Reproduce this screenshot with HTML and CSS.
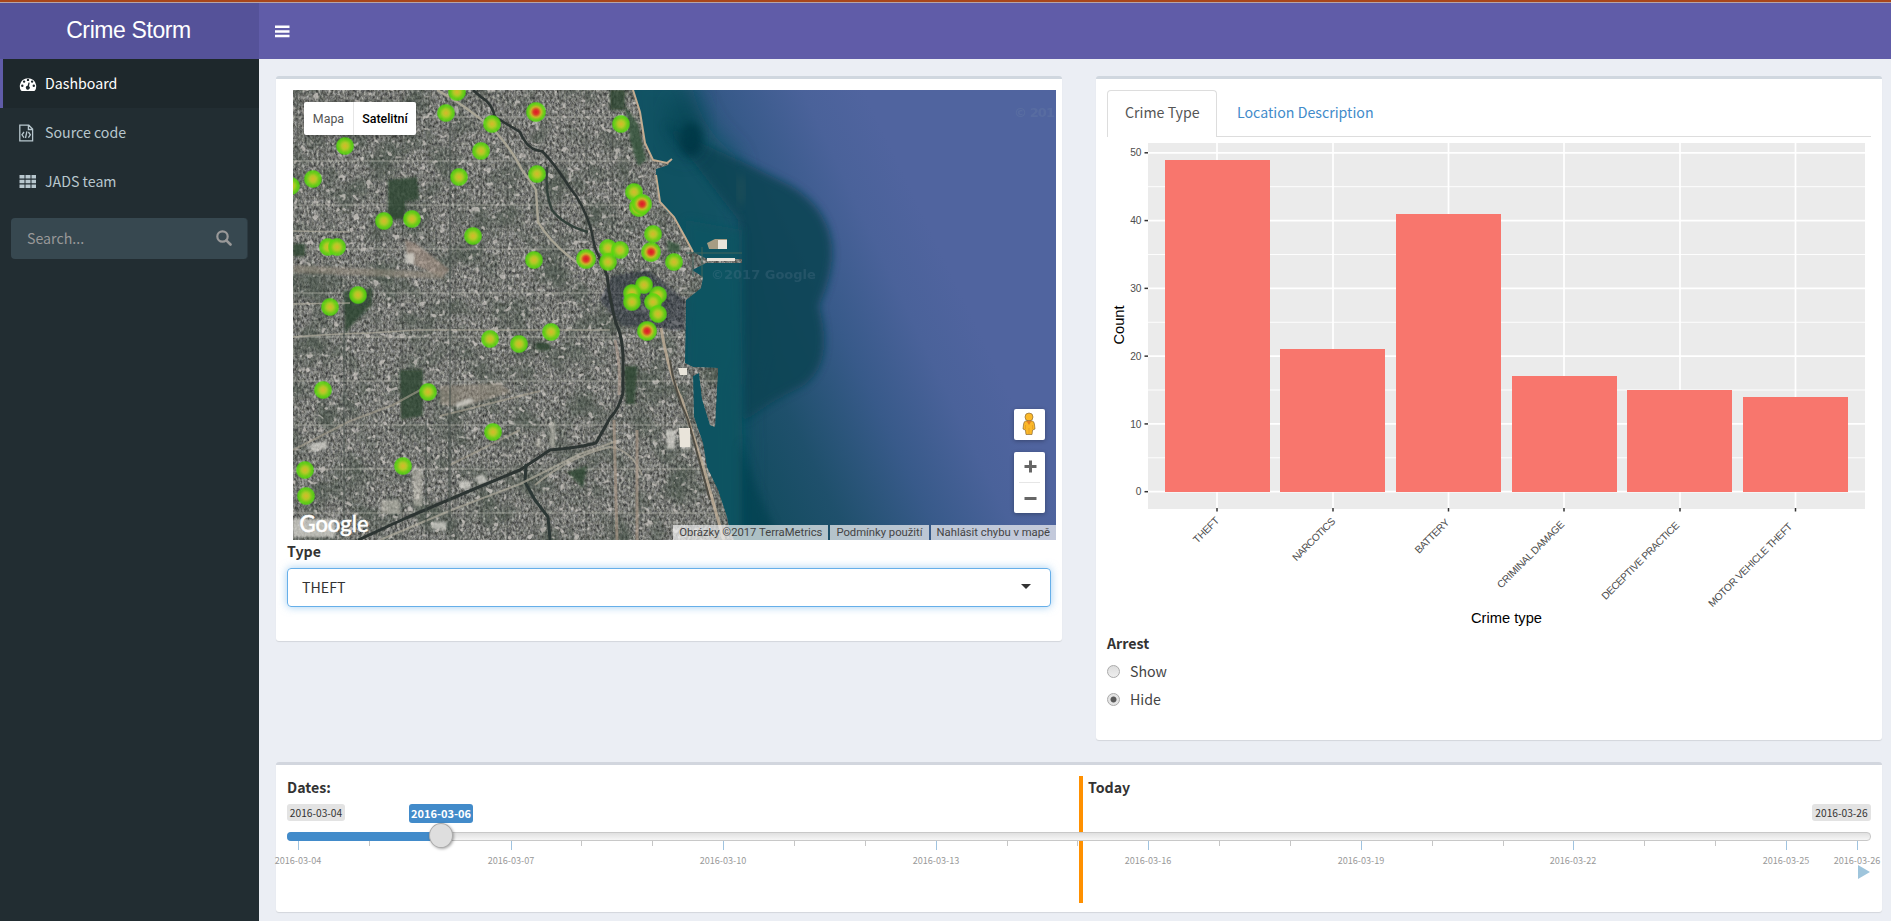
FILE: index.html
```html
<!DOCTYPE html>
<html lang="en">
<head>
<meta charset="utf-8">
<title>Crime Storm</title>
<link rel="stylesheet" href="styles.css">
</head>
<body>
<div class="app">
  <aside class="sidebar">
    <div class="logo">Crime Storm</div>
    <nav class="menu">
      <a class="menu-item active">
        <svg class="icon" viewBox="0 0 18 16" width="18" height="16"><path fill="currentColor" fill-rule="evenodd" d="M2 14.6 A8.2 8.2 0 1 1 16 14.6 Q15.7 15 15.2 15 H2.800 Q2.300 15 2 14.600 Z M2.100 9.800a1.200 1.200 0 1 0 2.400 0a1.200 1.200 0 1 0-2.400 0 M3.900 5.600a1.200 1.200 0 1 0 2.400 0a1.200 1.200 0 1 0-2.400 0 M7.800 3.900a1.200 1.200 0 1 0 2.400 0a1.200 1.200 0 1 0-2.400 0 M11.900 5.600a1.200 1.200 0 1 0 2.400 0a1.200 1.200 0 1 0-2.400 0 M13.600 9.800a1.200 1.200 0 1 0 2.400 0a1.200 1.200 0 1 0-2.400 0 M9.500 6.400 L8.600 9.800 A1.900 1.900 0 1 0 10 10.200 L10.700 6.700 Z"/></svg>
        <span>Dashboard</span></a>
      <a class="menu-item">
        <svg class="icon" viewBox="0 0 18 18" width="18" height="18"><path fill="none" stroke="currentColor" stroke-width="1.300" d="M.8 1.200 H9.800 L13.600 5 V16.800 H.8 Z M9.400 1.200 V5.500 H13.600 M5 8 L3 10.800 L5 13.600 M9.400 8 L11.400 10.800 L9.400 13.600 M7.900 7.400 L6.500 14"/></svg>
        <span>Source code</span></a>
      <a class="menu-item">
        <svg class="icon" viewBox="0 0 17 16" width="17" height="16"><path fill="currentColor" d="M0 1h5v3.600H0zM6 1h5v3.600H6zM12 1h4.500v3.600H12zM0 5.700h5v3.600H0zM6 5.700h5v3.600H6zM12 5.700h4.500v3.600H12zM0 10.400h5V14H0zM6 10.400h5V14H6zM12 10.400h4.500V14H12z"/></svg>
        <span>JADS team</span></a>
    </nav>
    <div class="search"><span>Search...</span>
      <svg viewBox="0 0 16 16" width="16" height="16"><circle cx="6.500" cy="6.500" r="5.200" fill="none" stroke="currentColor" stroke-width="2.200"/><path d="M10.300 10.300 L14.500 14.500" stroke="currentColor" stroke-width="2.600" stroke-linecap="round"/></svg>
    </div>
  </aside>
  <div class="main">
    <header class="topbar"><svg viewBox="0 0 15 13" width="15" height="13"><path fill="#fff" d="M0 .5h14.500v2.500H0zM0 5.200h14.500v2.500H0zM0 9.800h14.500v2.500H0z"/></svg></header>
    <main class="content">
      <div class="columns">
        <section class="box map-box">
          <div class="map">
            <svg class="map-art" viewBox="293 90 763 450" width="763" height="450">
              <defs>
                <filter id="city" x="0" y="0" width="100%" height="100%" color-interpolation-filters="sRGB">
                  <feTurbulence type="fractalNoise" baseFrequency="0.42 0.28" numOctaves="3" seed="7"/>
                  <feColorMatrix values="1.050 .2 0 0 -0.150  1.050 .2 0 0 -0.145  1.020 .15 .05 0 -0.145  0 0 0 0 1"/>
                </filter>
                <filter id="blotch" x="0" y="0" width="100%" height="100%" color-interpolation-filters="sRGB">
                  <feTurbulence type="fractalNoise" baseFrequency="0.03" numOctaves="3" seed="12"/>
                  <feColorMatrix values="0 0 0 0 0.240  0 0 0 0 0.300  0 0 0 0 0.250  0 3 0 0 -1.350"/>
                </filter>
                <filter id="roofs" x="0" y="0" width="100%" height="100%" color-interpolation-filters="sRGB">
                  <feTurbulence type="fractalNoise" baseFrequency="0.150" numOctaves="2" seed="31"/>
                  <feColorMatrix values="0 0 0 0 0.820  0 0 0 0 0.800  0 0 0 0 0.780  0 0 8 0 -5.100"/>
                </filter>
                <filter id="b1" x="-20%" y="-20%" width="140%" height="140%"><feGaussianBlur stdDeviation=".8"/></filter>
                <filter id="b4" x="-30%" y="-30%" width="160%" height="160%"><feGaussianBlur stdDeviation="4"/></filter>
                <filter id="b10" x="-50%" y="-50%" width="200%" height="200%"><feGaussianBlur stdDeviation="11"/></filter>
                <linearGradient id="lake" gradientUnits="userSpaceOnUse" x1="705" y1="400" x2="955" y2="280">
                  <stop offset="0" stop-color="#134c5f"/><stop offset=".25" stop-color="#1f506c"/><stop offset=".55" stop-color="#385a8a"/><stop offset=".8" stop-color="#4a629a"/><stop offset="1" stop-color="#50649f"/>
                </linearGradient>
                <radialGradient id="h"><stop offset="0" stop-color="#d8b82c"/><stop offset=".35" stop-color="#b4cc24" stop-opacity=".97"/><stop offset=".65" stop-color="#6fd015" stop-opacity=".95"/><stop offset=".85" stop-color="#55d80c" stop-opacity=".85"/><stop offset="1" stop-color="#50d80c" stop-opacity="0"/></radialGradient>
                <radialGradient id="r"><stop offset="0" stop-color="#e01528"/><stop offset=".25" stop-color="#dc3c26"/><stop offset=".5" stop-color="#c8b828"/><stop offset=".72" stop-color="#74d015" stop-opacity=".95"/><stop offset=".87" stop-color="#55d80c" stop-opacity=".85"/><stop offset="1" stop-color="#50d80c" stop-opacity="0"/></radialGradient>
                <pattern id="blocks" width="52.500" height="44" patternUnits="userSpaceOnUse" x="310" y="96"><path d="M14 0V44 M40 0V44" stroke="#3b413c" stroke-opacity=".45" stroke-width="1.200"/><path d="M0 21H53" stroke="#b9b8b2" stroke-opacity=".4" stroke-width="1.500"/></pattern>
                <pattern id="alleys" width="5" height="20" patternUnits="userSpaceOnUse"><path d="M1 0V20" stroke="#343a38" stroke-opacity=".2"/></pattern>
                <clipPath id="land"><path d="M293 90 H633 L640 112 L645 143 L653 160 L667 163 L672 159 L668 165 L656 169 L656 184 L660 202 L667 212 L674 217 L685 237 L693 252 L707 259 H742 V263 H706 L692 270 L703 277 L701 288 L686 300 L685 363 L693 367 L718 368 L715 427 L710 425 L702 399 L699 373 L693 376 L694 417 L703 443 L707 467 L718 490 L727 517 L729 528 L734 540 H293 Z"/></clipPath>
              </defs>
              <rect x="293" y="90" width="763" height="450" fill="url(#lake)"/>
              <path d="M620 70 H690 Q695 125 735 155 L760 330 L742 390 L745 560 H650 Z" fill="#095360" opacity=".8" filter="url(#b10)"/>
              <path d="M664 124 Q710 148 744 162 L788 184 Q820 202 829 231 Q839 262 819 306 Q835 364 803 386 Q770 402 742 423 L738 220 Z" fill="#094455" opacity=".9" filter="url(#b4)"/>
              <path d="M686 220 L742 230 V550 L690 520 Z" fill="#0c5562" opacity=".7" filter="url(#b4)"/>
              <ellipse cx="691" cy="139" rx="11" ry="17" fill="#053444" filter="url(#b4)"/>
              <ellipse cx="685" cy="125" rx="16" ry="30" fill="#053f4d" opacity=".6" filter="url(#b10)"/>
              <path d="M741 440 Q758 500 785 548 H741 Z" fill="#06404f" opacity=".65" filter="url(#b4)"/>
              <ellipse cx="741" cy="190" rx="3" ry="17" fill="#47635a" opacity=".35" filter="url(#b4)"/>
              <g class="watermark"><text x="1014" y="117" textLength="41">© 201</text><text x="711" y="279">©2017 Google</text></g>
              <g clip-path="url(#land)">
                <rect x="293" y="90" width="455" height="450" filter="url(#city)"/>
                <rect x="293" y="90" width="455" height="450" fill="#7b7b77" opacity=".3"/>
                <rect x="293" y="90" width="455" height="450" filter="url(#blotch)" opacity=".55"/>
                <rect x="293" y="90" width="455" height="450" fill="url(#alleys)"/>
                <rect x="293" y="90" width="455" height="450" fill="url(#blocks)"/>
                <rect x="293" y="90" width="455" height="450" filter="url(#roofs)" opacity=".7"/>
                <g filter="url(#b1)">
                  <path d="M388 180 L417 177 L419 199 L405 201 V219 H388 Z M400 370 H423 V416 L401 419 Z M344 291 L372 288 V304 L345 332 Z M624 366 H637 L635 404 H626 Z M610 90 H625 V110 H610 Z M568 472 L587 466 L583 487 Z M293 244 H305 V256 H293 Z M536 343 H550 V350 H536 Z" fill="#2b4631" opacity=".8"/>
                  <path d="M625 106 L638 124 L646 160 L638 166 L630 140 Z M667 240 L680 245 V252 H668 Z" fill="#36543b" opacity=".8"/>
                  <path d="M612 276 L648 270 L685 300 V330 L622 326 L600 300 Z" fill="#232938" opacity=".5"/>
                  <path d="M405 240 L415 243 L450 270 L442 277 L408 262 Z" fill="#a08e80" opacity=".6"/>
                  <path d="M293 265 L440 272 L445 279 L293 273 Z M440 386 L500 383 L512 392 L463 407 L440 405 Z" fill="#9c9282" opacity=".5"/>
                  <path d="M309 445 L327 441 V448 L312 452 Z M405 254 L414 253 V265 L405 262 Z M455 404 L470 398 L474 402 L457 408 Z M475 477 L483 474 L488 482 L479 485 Z M459 481 H470 V489 H460 Z M431 522 H446 V529 H432 Z M293 519 H335 V537 H293 Z M681 433 H691 V449 H681 Z M666 430 H675 V449 H667 Z" fill="#deddd5" opacity=".7"/>
                  <path d="M550 423 L555 421 V448 H550 Z M536 438 H541 V447 H536 Z M381 500 H400 V513 H381 Z M412 470 H422 V506 H414 Z" fill="#d5d1c6" opacity=".5"/>
                </g>
                <g fill="none" stroke-linejoin="round">
                  <path d="M437 90 Q465 105 494 130 Q513 151 522 170 Q532 183 536 190 L538 222 Q551 244 579 264" stroke="#aaa696" stroke-width="2.400"/>
                  <path d="M473 90 L481 97 Q492 103 495 117 L520 132 Q528 151 542 151 Q555 164 570 188 Q583 203 591 229 L595 248 L607 275" stroke="#2c3432" stroke-width="2.600"/>
                  <path d="M607 275 Q610 302 616 323 Q624 340 623 365 V393 Q619 409 610 418 L596 443 Q577 448 550 450 L520 470 L467 492 L406 518 L358 540" stroke="#2c3432" stroke-width="3"/>
                  <path d="M547 167 Q545 194 552 210 Q563 225 588 232" stroke="#32403a" stroke-width="2.400"/>
                  <path d="M526 464 L525 482 L535 500 L548 517 L550 540" stroke="#2c3735" stroke-width="3"/>
                  <path d="M293 337 Q330 334 370 333 L416 330 H610 M350 232 L293 231 M293 304 L350 303" stroke="#b1ad9e" stroke-width="1.500" opacity=".7"/>
                  <path d="M380 540 L454 509 L520 484 L580 454 L617 441 M535 485 Q570 456 610 447 Q632 450 642 475" stroke="#b1ad9e" stroke-width="2" opacity=".7"/>
                  <path d="M293 450 L350 421 L393 405 L433 383 M440 416 L540 391 M450 465 L520 430" stroke="#aaa493" stroke-width="2" opacity=".6"/>
                  <path d="M450 90 V520 M449 410 V530 M344 305 V530 M426 420 V530" stroke="#454c47" stroke-width="1.500" opacity=".6"/>
                  <path d="M637 430 V540 M614 420 L617 540" stroke="#aa9887" stroke-width="3" opacity=".65"/>
                  <path d="M615 340 Q621 365 619 395" stroke="#b5a294" stroke-width="3" opacity=".6"/>
                  <path d="M661 328 Q669 375 682 400 Q691 430 704 469 Q711 496 724 540" stroke="#c2b099" stroke-width="3" opacity=".8"/>
                  <path d="M670 360 Q674 390 688 420 L710 500" stroke="#504d44" stroke-width="2"/>
                </g>
              </g>
              <path d="M633 90 L640 112 L645 143 L653 160 L667 163 L672 159 M656 175 L660 202 L674 217 L685 237 L693 252" fill="none" stroke="#c3ac91" stroke-width="2"/>
              <path d="M707 243 L715 239 H727 V249 H709 Z" fill="#a69c83"/><path d="M718 240 H727 V249 H718 Z M707 258 H735 V261 H707 Z M679 428 H690 V447 H680 Z M678 368 H687 V375 H680 Z" fill="#e9e4da"/>
              <path d="M693 255 V277 M702 247 V278 M686 253 H742" stroke="#42645d" fill="none"/>
              <g id="heat"></g>
              <text class="google" x="299.500" y="532" textLength="69" lengthAdjust="spacingAndGlyphs">Google</text>
            </svg>
            <div class="map-types"><span>Mapa</span><span class="selected">Satelitní</span></div>
            <div class="pegman"><svg viewBox="0 0 14 24" width="14" height="24"><circle cx="7" cy="5" r="4" fill="#fbb829" stroke="#8c6b37" stroke-width=".7"/><path d="M3.800 9 H10.200 Q12 9.200 12.400 12 L13 17 L10.600 18 L10 22.500 H4 L3.400 18 L1 17 L1.600 12 Q2 9.200 3.800 9 Z" fill="#fbb829" stroke="#8c6b37" stroke-width=".7"/><path d="M4.500 9 H9.500 L7 13 Z" fill="#e57f22"/><path d="M7 16V22 M3.500 13V17 M10.500 13V17" stroke="#dc9422" stroke-width=".6"/></svg></div>
            <div class="zoom"><svg viewBox="0 0 31 61" width="31" height="61"><path d="M10.500 14.500H22.500 M16.500 8.500V20.500 M10.500 46.500H22.500" stroke="#666" stroke-width="3"/><path d="M5 30.500H26" stroke="#e6e6e6"/></svg></div>
            <div class="attribution"><span>Obrázky ©2017 TerraMetrics</span><span>Podmínky použití</span><span>Nahlásit chybu v mapě</span></div>
          </div>
          <label class="label type-label">Type</label>
          <div class="select"><span>THEFT</span><i class="caret"></i></div>
        </section>
        <section class="box chart-box">
          <div class="tabs"><span class="tab active">Crime Type</span><span class="tab">Location Description</span></div>
          <svg id="chart" class="chart" viewBox="1107 137 764 490" width="764" height="490"></svg>
          <label class="label">Arrest</label>
          <div class="radio"><i class="dot"></i><span>Show</span></div>
          <div class="radio"><i class="dot on"></i><span>Hide</span></div>
        </section>
      </div>
      <section class="box dates-box">
        <label class="label dates-label">Dates:</label>
        <div class="today"><b>Today</b></div>
        <div class="slider">
          <span class="limit">2016-03-04</span><span class="limit">2016-03-26</span>
          <span class="value">2016-03-06</span>
          <div class="track"><div class="fill"></div></div>
          <i class="handle"></i>
          <svg id="ticks" class="ticks" viewBox="276 841 1606 26" width="1606" height="26"></svg>
        </div>
        <i class="play"></i>
      </section>
    </main>
  </div>
</div>
<script src="app.js"></script>
</body>
</html>
```
FILE: styles.css
```css
* { box-sizing: border-box; }
body {
  margin: 0;
  height: 921px;
  overflow: hidden;
  background: #ebeef4;
  color: #333;
  font: 14.2px/22px "Noto Sans CJK SC", "Noto Sans", sans-serif;
}
.app {
  display: flex;
  height: 921px;
  border-top: 2px solid #a8461a;
}
.sidebar { flex: none; width: 259px; background: #222d32; border-top: 1px solid #b5a4a8; }
.logo {
  height: 56px;
  padding-right: 2px;
  background: #555299;
  color: #fff;
  font: 23px/55px "Liberation Sans", Arial, sans-serif;
  letter-spacing: -.4px;
  text-align: center;
}
.menu-item {
  display: flex;
  align-items: center;
  height: 49px;
  padding: 0 0 0 16px;
  border-left: 3px solid transparent;
  color: #b8c7ce;
}
.menu-item span { margin-top: -1px; }
.menu-item .icon { flex: none; width: 18px; margin-right: 8px; }
.menu-item.active { background: #1e282c; color: #fff; border-left-color: #605ca8; }
.search {
  display: flex;
  align-items: center;
  justify-content: space-between;
  width: 237px;
  height: 41px;
  margin: 12px 0 0 11px;
  padding: 0 15px 1px 16px;
  border-radius: 4px;
  border-right: 1px solid #2c3a41;
  background: #374850;
  color: #999;
}
.main { flex: 1; min-width: 0; }
.topbar {
  height: 57px;
  padding: 22px 0 0 16px;
  border-top: 1px solid #b5a4a8;
  background: #605ca8;
}
.topbar svg { display: block; }
.content { padding: 17px 9px 0 17px; }
.columns {
  display: grid;
  grid-template-columns: minmax(0, 1fr) minmax(0, 1fr);
  gap: 34px;
  align-items: start;
  height: 686px;
}
.box {
  background: #fff;
  border-top: 3px solid #d0d7df;
  border-radius: 3px;
  box-shadow: 0 1px 1px rgba(0, 0, 0, .1);
  padding: 11px;
}
.label { display: block; font-weight: 700; line-height: 22px; }
.map-box { height: 565px; }
.map { position: relative; width: 763px; height: 450px; margin-left: 6px; overflow: hidden; }
.map-art { display: block; }
.watermark { font: bold 13px "DejaVu Sans", sans-serif; fill: #7d93aa; opacity: .18; }
.google { font: 400 23px Lato, sans-serif; fill: #fff; stroke: #fff; stroke-width: .6px; }
.map-types {
  position: absolute;
  left: 11px;
  top: 12px;
  display: flex;
  width: 112px;
  height: 33px;
  background: #fff;
  border-radius: 2px;
  color: #565656;
  font: 12.4px/33px Roboto, sans-serif;
  box-shadow: 0 1px 4px rgba(0, 0, 0, .3);
}
.map-types span { width: 49px; text-align: center; }
.map-types .selected { width: 63px; color: #000; font-weight: 500; border-left: 1px solid #e6e6e6; }
.pegman, .zoom {
  position: absolute;
  right: 11px;
  width: 31px;
  background: #fff;
  border-radius: 2px;
  box-shadow: 0 1px 4px rgba(0, 0, 0, .3);
}
.pegman { top: 319px; height: 31px; padding: 3px 8px; }
.pegman svg, .zoom svg { display: block; }
.zoom { top: 362px; height: 61px; }
.attribution {
  position: absolute;
  right: 0;
  bottom: 0;
  display: flex;
  gap: 2px;
  font: 11.25px/16px Roboto, sans-serif;
  color: #444;
}
.attribution span { height: 15px; padding: 0 6px; background: rgba(245, 245, 245, .7); white-space: nowrap; }
.type-label { margin-bottom: 6px; }
.select {
  display: flex;
  align-items: center;
  justify-content: space-between;
  width: 764px;
  height: 39px;
  padding: 0 19px 2px 14px;
  border: 1px solid #66afe9;
  border-radius: 4px;
  box-shadow: 0 0 9px rgba(102, 175, 233, .6);
}
.caret { border: 5px solid transparent; border-top-color: #333; border-bottom: 0; }
.chart-box { height: 664px; }
.tabs { display: flex; height: 47px; border-bottom: 1px solid #ddd; line-height: 45px; white-space: nowrap; }
.tab { height: 47px; padding: 0 20px; color: #428bca; }
.tab.active { width: 110px; padding: 0 0 0 17px; border: 1px solid #ddd; border-bottom: 0; border-radius: 4px 4px 0 0; background: #fff; color: #555; line-height: 43px; }
.chart { display: block; }
.chart text { font-family: "Liberation Sans", Arial, sans-serif; }
.chart .tick-text { font-size: 10.2px; fill: #4d4d4d; }
.chart .axis-title { font-size: 14.7px; fill: #000; text-anchor: middle; }
.chart-box .label { margin-top: 5px; }
.radio { display: flex; align-items: center; gap: 10px; height: 28px; color: #444; }
.chart-box .label + .radio { margin-top: 3px; }
.dot { width: 13px; height: 13px; border: 1px solid #aaa; border-radius: 50%; background: linear-gradient(#ddd, #eee); }
.dot.on { background: radial-gradient(circle, #5a5a5a 0 2.6px, #e4e4e4 3.4px); }
.dates-box { position: relative; height: 150px; border-top-color: #d2d6de; }
.today {
  position: absolute;
  left: 803px;
  top: 11px;
  height: 127px;
  padding-left: 5px;
  border-left: 4px solid #ff9000;
}
.slider { position: absolute; inset: 0; }
.limit, .value {
  position: absolute;
  left: 11px;
  top: 39px;
  width: 58px;
  height: 17px;
  border-radius: 3px;
  background: #e3e3e3;
  font-size: 10.2px;
  line-height: 17px;
  text-align: center;
}
.limit + .limit { left: auto; right: 11px; width: 59px; }
.value { left: 133px; width: 64px; height: 19px; background: #428bca; color: #fff; font-size: 11px; font-weight: 700; line-height: 19px; }
.track {
  position: absolute;
  left: 11px;
  right: 11px;
  top: 67px;
  height: 9px;
  border: 1px solid #c8c8c8;
  border-radius: 4px;
  background: linear-gradient(#e0e0e0, #f6f6f6);
}
.fill { width: 153px; height: 9px; margin: -1px; border-radius: 4px 0 0 4px; background: #428bca; }
.handle {
  position: absolute;
  left: 153px;
  top: 58px;
  z-index: 1;
  width: 24px;
  height: 25px;
  border: 1px solid #aaa;
  border-radius: 50%;
  background: #dedede;
  box-shadow: 1px 1px 3px rgba(0, 0, 0, .35);
}
.ticks { position: absolute; left: 0; top: 76px; overflow: visible; }
.ticks text { font-size: 9.1px; fill: #999; text-anchor: middle; }
.play { position: absolute; right: 12px; top: 100px; border: 7px solid transparent; border-left: 12px solid #9fc5dc; border-right: 0; }
```
FILE: app.js
```js
// Small helper that serialises an SVG element.
const el = (name, attrs, text = '') =>
  `<${name} ${Object.entries(attrs).map(([k, v]) => `${k}="${v}"`).join(' ')}>${text}</${name}>`;

// Heat map points.
const spots = [[457,92],[446,113],[492,124],[481,151],[621,124],[345,146],[313,179],[291,186],[459,177],[537,174],[634,192],[384,221],[412,219],[473,236],[534,260],[328,247],[337,247],[608,248],[620,250],[608,262],[653,234],[674,262],[644,285],[632,293],[632,302],[658,295],[653,302],[358,295],[330,307],[658,314],[551,332],[490,339],[519,344],[323,390],[428,392],[493,432],[403,466],[305,470],[306,496]];
const hot = [[536,112],[639,207],[642,204],[586,259],[651,252],[647,331]];
document.getElementById('heat').innerHTML =
  spots.map(([cx, cy]) => el('circle', { cx, cy, r: 9.5, fill: 'url(#h)' })).join('') +
  hot.map(([cx, cy]) => el('circle', { cx, cy, r: 10.5, fill: 'url(#r)' })).join('');

// Bar chart.
const bars = [
  ['THEFT', 49, 1165, 1217, 1220, 521, 32],
  ['NARCOTICS', 21, 1280, 1333, 1336, 522, 56],
  ['BATTERY', 41, 1396, 1448.5, 1450, 523, 44],
  ['CRIMINAL DAMAGE', 17, 1512, 1564, 1565, 525, 90],
  ['DECEPTIVE PRACTICE', 15, 1627, 1680, 1680, 526, 105],
  ['MOTOR VEHICLE THEFT', 14, 1743, 1795.5, 1793, 527, 114]
];
const y = v => 491.7 - v * 6.778;
let out = el('rect', { x: 1148, y: 143, width: 717, height: 366, fill: '#ebebeb' });
for (let v = 0; v <= 50; v += 5) {
  out += el('path', { d: `M1148 ${y(v)}H1865`, stroke: '#fff', 'stroke-width': v % 10 ? 0.9 : 1.7 });
  if (v % 10 === 0) {
    out += el('path', { d: `M1144.500 ${y(v)}H1148`, stroke: '#333', 'stroke-width': 1.5 });
    out += el('text', { class: 'tick-text', x: 1141.5, y: y(v) + 3.6, 'text-anchor': 'end' }, v);
  }
}
bars.forEach(b => { out += el('path', { d: `M${b[3]} 143V509`, stroke: '#fff', 'stroke-width': 1.7 }); });
bars.forEach(([name, v, x, c, tx, ty, len]) => {
  out += el('rect', { x, y: Math.round(y(v)), width: 105, height: 492 - Math.round(y(v)), fill: '#f8766d' });
  out += el('path', { d: `M${c} 508V511.500`, stroke: '#333', 'stroke-width': 1.5 });
  out += el('text', { class: 'tick-text', x: tx, y: ty, 'text-anchor': 'end', textLength: len, transform: `rotate(-45 ${tx} ${ty})` }, name);
});
out += el('text', { class: 'axis-title', x: 1124, y: 325, transform: 'rotate(-90 1124 325)' }, 'Count');
out += el('text', { class: 'axis-title', x: 1506.5, y: 623 }, 'Crime type');
document.getElementById('chart').innerHTML = out;

// Timeline ticks, one per day.
let ticks = '';
for (let d = 0; d <= 22; d++) {
  const x = Math.round(298 + d * 70.86) + 0.5;
  const major = d % 3 === 0 || d === 22;
  ticks += el('path', { d: `M${x} 841v${major ? 9 : 5}`, stroke: major ? '#9fc3e0' : '#c6c6c6' });
  if (major) ticks += el('text', { x: x - 0.5, y: 864 }, `2016-03-${String(d + 4).padStart(2, '0')}`);
}
document.getElementById('ticks').innerHTML = ticks;
```
